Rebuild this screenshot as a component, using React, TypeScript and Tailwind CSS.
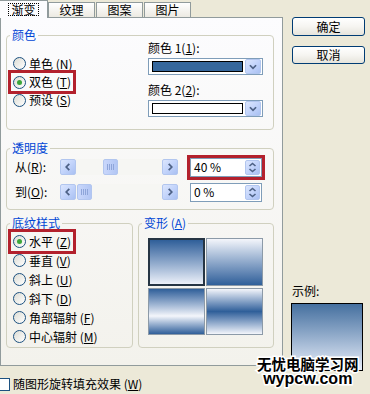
import React from "react";

const font = "font-['Noto_Sans_CJK_SC','Noto_Sans',sans-serif]";

function Hot({ k }: { k: string }) {
  return (
    <span>
      (<span className="underline underline-offset-1">{k}</span>)
    </span>
  );
}

function Radio({ checked }: { checked?: boolean }) {
  return (
    <span className="flex h-[13px] w-[13px] shrink-0 items-center justify-center rounded-full border border-[#1c5180] bg-gradient-to-br from-[#dcdcd4] to-white">
      {checked && <span className="h-[5px] w-[5px] rounded-full bg-[#3aa63a]" />}
    </span>
  );
}

function RadioRow({
  label,
  k,
  checked,
  mark,
  h = "h-[19px]",
}: {
  label: string;
  k: string;
  checked?: boolean;
  mark?: boolean;
  h?: string;
}) {
  return (
    <div className={`flex ${h} items-center pl-[4px]`}>
      <div
        className={`inline-flex h-full items-center gap-[3px] px-[2px] ${
          mark ? "outline-[3px] outline-solid outline-[#b3212d]" : ""
        }`}
      >
        <Radio checked={checked} />
        <span className="leading-[12px]">
          {label} <Hot k={k} />
        </span>
      </div>
    </div>
  );
}

function Chevron({ points }: { points: string }) {
  return (
    <svg width="16" height="16" viewBox="0 0 16 16" className="block">
      <polyline points={points} fill="none" stroke="#4d6185" strokeWidth="2" />
    </svg>
  );
}

const blueBtn =
  "flex items-center justify-center rounded-[2px] border border-[#b2c6ef] bg-gradient-to-br from-[#dce6fd] via-[#c3d4fb] to-[#a9c0f2]";

function Group({
  title,
  className,
  children,
}: {
  title: React.ReactNode;
  className: string;
  children: React.ReactNode;
}) {
  return (
    <fieldset className={`rounded-[4px] border border-[#d0d0bf] ${className}`}>
      <legend className="ml-[3px] px-[2px] text-[12px] leading-[12px] text-[#0046d5]">{title}</legend>
      {children}
    </fieldset>
  );
}

function ColorCombo({ color }: { color: string }) {
  return (
    <div className="flex h-[17px] w-[115px] items-center border border-[#7f9db9] bg-white">
      <div className={`ml-[3px] h-[11px] w-[91px] border border-black ${color}`} />
      <div className={`ml-auto mr-[1px] h-[15px] w-[16px] ${blueBtn}`}>
        <Chevron points="4.5,6 8,9.5 11.5,6" />
      </div>
    </div>
  );
}

function ScrollBar({ thumb }: { thumb: string }) {
  return (
    <div className="flex h-[16px] w-[118px] bg-[#f6f6f3]">
      <div className={`h-[16px] w-[16px] ${blueBtn}`}>
        <Chevron points="9.5,4.5 6,8 9.5,11.5" />
      </div>
      <div className="flex flex-1">
        <div
          className={`flex h-[16px] w-[15px] items-center justify-center gap-[1px] rounded-[2px] border border-[#b2c6ef] bg-gradient-to-r from-[#c9d7fb] to-[#b2c6f4] ${thumb}`}
        >
          <span className="h-[6px] w-[1px] bg-[#8ea5d9]" />
          <span className="h-[6px] w-[1px] bg-[#8ea5d9]" />
          <span className="h-[6px] w-[1px] bg-[#8ea5d9]" />
          <span className="h-[6px] w-[1px] bg-[#8ea5d9]" />
        </div>
      </div>
      <div className={`h-[16px] w-[16px] ${blueBtn}`}>
        <Chevron points="6.5,4.5 10,8 6.5,11.5" />
      </div>
    </div>
  );
}

function Spin({ value, mark }: { value: string; mark?: boolean }) {
  return (
    <div
      className={`flex h-[19px] w-[72px] items-center border border-[#7f9db9] bg-white ${
        mark ? "outline-[3px] outline-solid outline-[#b3212d]" : ""
      }`}
    >
      <span className="flex-1 pl-[3px] text-[12px] leading-[12px]">{value}</span>
      <div className={`mr-[1px] h-[15px] w-[15px] flex-col ${blueBtn}`}>
        <svg width="13" height="13" viewBox="0 0 13 13" className="block">
          <polyline points="3.5,5 6.5,2.5 9.5,5" fill="none" stroke="#4d6185" strokeWidth="1.6" />
          <polyline points="3.5,8 6.5,10.5 9.5,8" fill="none" stroke="#4d6185" strokeWidth="1.6" />
        </svg>
      </div>
    </div>
  );
}

function XpButton({ label, h }: { label: string; h: string }) {
  return (
    <div
      className={`flex ${h} w-[73px] items-center justify-center rounded-[3px] border border-[#003c74] bg-gradient-to-b from-white via-[#f6f5f1] to-[#e6e4dc] text-[12px] leading-[12px]`}
    >
      {label}
    </div>
  );
}

export default function App() {
  return (
    <div
      className={`relative flex h-[394px] w-[370px] overflow-hidden bg-[#ece9d8] text-[12px] text-black ${font}`}
    >
      {/* left: tabs + panel */}
      <div className="flex w-[283px] shrink-0 flex-col">
        <div className="flex h-[17px] items-end">
          <div className="relative z-10 -mb-[1px] flex h-[18px] w-[48px] items-start justify-center border-r border-t border-[#919b9c] bg-[#fcfcfe] pt-[2px]">
            <span className="border border-dotted border-black px-[2px] leading-[11px]">渐变</span>
          </div>
          {["纹理", "图案", "图片"].map((t, i) => (
            <div
              key={t}
              className={`flex h-[15px] w-[47px] items-center justify-center border border-b-0 border-[#919b9c] bg-gradient-to-b from-white to-[#eceae2] leading-[12px] ${
                i === 0 ? "" : "ml-[1px]"
              }`}
            >
              {t}
            </div>
          ))}
        </div>

        <div className="h-[349px] border border-[#919b9c] bg-gradient-to-b from-[#fcfcfe] to-[#f3f2ec] pl-[5px] pt-[11px]">
          <Group title="颜色" className="h-[101px] w-[268px]">
            <div className="flex">
              <div className="flex w-[141px] flex-col pt-[13px]">
                <RadioRow label="单色" k="N" />
                <RadioRow label="双色" k="T" checked mark h="h-[18px]" />
                <RadioRow label="预设" k="S" h="h-[18px]" />
              </div>
              <div className="flex flex-col pt-[1px]">
                <span className="leading-[12px]">
                  颜色 1(<span className="underline">1</span>):
                </span>
                <div className="mt-[4px]">
                  <ColorCombo color="bg-[#36679c]" />
                </div>
                <span className="mt-[9px] leading-[12px]">
                  颜色 2(<span className="underline">2</span>):
                </span>
                <div className="mt-[4px]">
                  <ColorCombo color="bg-white" />
                </div>
              </div>
            </div>
          </Group>

          <Group title="透明度" className="mt-[12px] h-[68px] w-[268px]">
            <div className="flex flex-col gap-[5px] pt-[3px]">
              <div className="flex h-[20px] items-center">
                <span className="w-[53px] pl-[8px] leading-[12px]">
                  从<Hot k="R" />:
                </span>
                <ScrollBar thumb="ml-[27px]" />
                <div className="ml-[12px]">
                  <Spin value="40 %" mark />
                </div>
              </div>
              <div className="flex h-[20px] items-center">
                <span className="w-[53px] pl-[8px] leading-[12px]">
                  到<Hot k="O" />:
                </span>
                <ScrollBar thumb="ml-[1px]" />
                <div className="ml-[12px]">
                  <Spin value="0 %" />
                </div>
              </div>
            </div>
          </Group>

          <div className="mt-[7px] flex">
            <Group title="底纹样式" className="h-[131px] w-[127px]">
              <div className="flex flex-col pt-[3px]">
                <RadioRow label="水平" k="Z" checked mark />
                <RadioRow label="垂直" k="V" />
                <RadioRow label="斜上" k="U" />
                <RadioRow label="斜下" k="D" />
                <RadioRow label="角部辐射" k="F" />
                <RadioRow label="中心辐射" k="M" />
              </div>
            </Group>
            <Group
              title={
                <span>
                  变形 <Hot k="A" />
                </span>
              }
              className="ml-[5px] h-[131px] w-[136px]"
            >
              <div className="grid grid-cols-[57px_57px] grid-rows-[48px_47px] gap-x-[1px] gap-y-[2px] pl-[9px] pt-[9px]">
                <div className="border-2 border-[#263544] bg-gradient-to-b from-[#2f5f99] to-[#edf1f9]" />
                <div className="border border-[#8c9aa8] bg-gradient-to-b from-[#f4f6fb] to-[#2f5f99]" />
                <div className="border border-[#8c9aa8] bg-gradient-to-b from-[#2f5f99] via-[#f4f6fb] via-60% to-[#2f5f99]" />
                <div className="border border-[#8c9aa8] bg-gradient-to-b from-[#f4f6fb] via-[#2f5f99] to-[#f4f6fb]" />
              </div>
            </Group>
          </div>
        </div>

        <div className="mt-[11px] flex h-[14px] items-center">
          <span className="-ml-[3px] h-[13px] w-[13px] border border-[#1c5180] bg-white" />
          <span className="ml-[3px] leading-[12px]">
            随图形旋转填充效果 <Hot k="W" />
          </span>
        </div>
      </div>

      {/* right: buttons + preview */}
      <div className="ml-[9px] flex w-[73px] flex-col">
        <div className="mt-[17px]">
          <XpButton label="确定" h="h-[19px]" />
        </div>
        <div className="mt-[10px]">
          <XpButton label="取消" h="h-[18px]" />
        </div>
        <span className="mt-[221px] leading-[12px]">示例:</span>
        <div className="-ml-[1px] mt-[6px] h-[68px] w-[72px] border border-black bg-gradient-to-b from-[#45709f] to-[#e8eef9]" />
      </div>

      {/* watermark */}
      <div className="absolute left-[257px] top-[356px] flex flex-col items-center font-bold text-black [-webkit-text-stroke:3px_white] [paint-order:stroke_fill]">
        <span className="block h-[16px] text-[14.5px] leading-[16px]">无忧电脑学习网</span>
        <span className="block h-[14px] font-['Liberation_Sans',sans-serif] text-[16px] leading-[14px]">wypcw.com</span>
      </div>
    </div>
  );
}
